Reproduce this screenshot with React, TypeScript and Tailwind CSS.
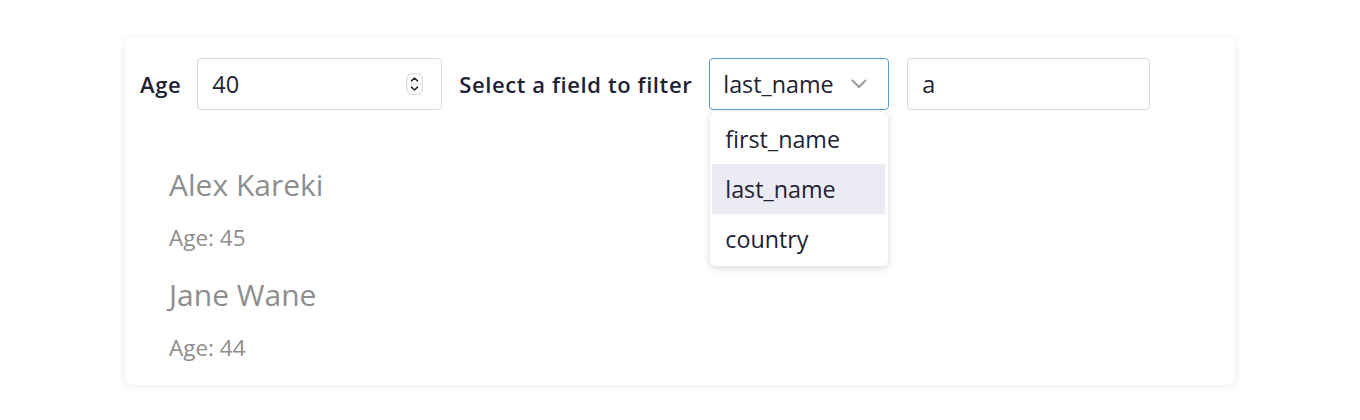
import React from "react";

function Spinner() {
  return (
    <svg width="17" height="22" viewBox="0 0 17 22" className="shrink-0">
      <rect x="0.75" y="0.75" width="15.5" height="20.5" rx="5" fill="#ffffff" stroke="#d4d4d4" strokeWidth="1" />
      <line x1="1.5" y1="11" x2="15.5" y2="11" stroke="#e4e4e4" strokeWidth="1" />
      <path d="M5.5 7.8 L8.5 5 L11.5 7.8" fill="none" stroke="#2a2a2a" strokeWidth="1.6" strokeLinecap="round" strokeLinejoin="round" />
      <path d="M5.5 14.2 L8.5 17 L11.5 14.2" fill="none" stroke="#2a2a2a" strokeWidth="1.6" strokeLinecap="round" strokeLinejoin="round" />
    </svg>
  );
}

function Chevron() {
  return (
    <svg width="16" height="10" viewBox="0 0 16 10" className="shrink-0">
      <path d="M1.5 1.5 L8 8 L14.5 1.5" fill="none" stroke="#9b9b9b" strokeWidth="2" strokeLinecap="round" strokeLinejoin="round" />
    </svg>
  );
}

const people = [
  { name: "Alex Kareki", age: 45 },
  { name: "Jane Wane", age: 44 },
];

export default function App() {
  return (
    <div
      className="min-h-screen bg-white pt-[38px] text-[#1f2233]"
      style={{ fontFamily: '"Open Sans", "Noto Sans", sans-serif' }}
    >
      <div className="mx-auto w-[1110px] rounded-lg bg-white pl-[15px] pr-4 pt-5 pb-[22px] shadow-[0_1px_10px_rgba(0,0,0,0.09)]">
        <div className="flex items-center">
          <label className="mr-[16px] pb-[1px] text-[22px] font-semibold leading-[30px] tracking-[0.6px]">Age</label>
          <div className="flex h-[52px] w-[245px] items-center justify-between rounded border border-[#dadada] pl-[14px] pr-[18px]">
            <span className="text-[23.5px] leading-[30px]">40</span>
            <Spinner />
          </div>
          <label className="ml-[17px] mr-[17px] pb-[1px] text-[22px] font-semibold leading-[30px] tracking-[0.6px]">
            Select a field to filter
          </label>
          <div className="relative">
            <div className="flex h-[52px] w-[180px] items-center justify-between rounded border border-[#5b9bd5] pl-[13px] pr-[21px]">
              <span className="text-[23.3px] leading-[30px]">last_name</span>
              <Chevron />
            </div>
            <div className="absolute left-[1px] top-[54px] w-[178px] rounded-md bg-white py-[2px] shadow-[0_2px_9px_rgba(0,0,0,0.16)]">
              {["first_name", "last_name", "country"].map((o) => (
                <div
                  key={o}
                  className={
                    "ml-[2px] mr-[3px] flex h-[50px] items-center pl-[13px] text-[23.3px] " +
                    (o === "last_name" ? "bg-[#ebebf3]" : "")
                  }
                >
                  {o}
                </div>
              ))}
            </div>
          </div>
          <div className="ml-[18px] flex h-[52px] w-[243px] items-center rounded border border-[#dadada] pl-[14px]">
            <span className="text-[23.5px] leading-[30px]">a</span>
          </div>
        </div>
        <ul className="mt-[55px] flex flex-col gap-[22px] pl-[29px]">
          {people.map((p) => (
            <li key={p.name} className="flex flex-col text-[#8e8e8e]">
              <span className="mb-[18px] text-[30px] leading-[40px]">{p.name}</span>
              <span className="text-[22.5px] leading-[30px]">Age: {p.age}</span>
            </li>
          ))}
        </ul>
      </div>
    </div>
  );
}
